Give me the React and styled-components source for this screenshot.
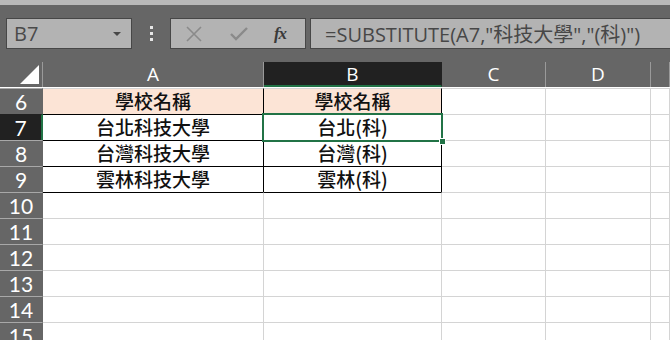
import React from "react";
import styled, { createGlobalStyle } from "styled-components";

const GlobalStyle = createGlobalStyle`
  html, body {
    margin: 0;
    padding: 0;
    background: #ffffff;
    overflow: hidden;
  }
`;

const GREEN = "#217346";

const StyledWindow = styled.div`
  width: 670px;
  height: 340px;
  overflow: hidden;
  background: #666666;
  display: flex;
  flex-direction: column;
`;

const StyledTopStrip = styled.div`
  height: 5px;
  background: #b9b9b9;
  flex: none;
`;

const StyledFormulaBar = styled.div`
  height: 57px;
  flex: none;
  display: flex;
  align-items: flex-start;
  padding: 13px 0 0 6px;
  box-sizing: border-box;
`;

const StyledNameBox = styled.div`
  width: 126px;
  height: 31px;
  box-sizing: border-box;
  background: #b3b3b3;
  border: 1px solid #474747;
  display: flex;
  align-items: center;
  justify-content: space-between;
  padding: 0 10px 0 7px;
  font-family: "Open Sans", "Liberation Sans", sans-serif;
  font-size: 20px;
  color: #4a4a4a;
`;

const StyledCaret = styled.span`
  width: 0;
  height: 0;
  border-left: 4px solid transparent;
  border-right: 4px solid transparent;
  border-top: 4px solid #474747;
`;

const StyledDots = styled.div`
  width: 38px;
  height: 31px;
  display: flex;
  flex-direction: column;
  align-items: center;
  justify-content: center;
  gap: 3px;

  span {
    width: 3px;
    height: 3px;
    background: #e6e6e6;
  }
`;

const StyledButtonBox = styled.div`
  width: 136px;
  height: 31px;
  box-sizing: border-box;
  background: #b3b3b3;
  border: 1px solid #474747;
  display: grid;
  grid-template-columns: 45px 45px 1fr;
  align-items: center;
  justify-items: center;
  margin-right: 4px;
`;

const StyledFx = styled.span`
  font-family: "Liberation Serif", serif;
  font-style: italic;
  font-weight: bold;
  font-size: 17px;
  color: #3a3a3a;
  letter-spacing: -1px;
  margin-right: 6px;
`;

const StyledFormulaBox = styled.div`
  flex: 1;
  height: 31px;
  box-sizing: border-box;
  background: #b3b3b3;
  border: 1px solid #474747;
  border-right: none;
  display: flex;
  align-items: center;
  padding-left: 14px;
  font-family: "Open Sans", "Noto Sans CJK TC", sans-serif;
  font-size: 20px;
  color: #474747;
  white-space: nowrap;
`;

const StyledGrid = styled.div`
  flex: 1;
  display: grid;
  grid-template-columns: 43px 221px 178px 104px 105px 1fr;
  grid-auto-rows: 26px;
  background: #ffffff;
`;

const StyledCorner = styled.div`
  background: #666666;
  border-right: 1px solid #9a9a9a;
  height: 25px;
  position: relative;

  &::after {
    content: "";
    position: absolute;
    right: 3px;
    bottom: 3px;
    width: 0;
    height: 0;
    border-left: 19px solid transparent;
    border-bottom: 19px solid #ffffff;
  }
`;

const StyledColHead = styled.div`
  height: 25px;
  box-sizing: border-box;
  background: ${(p) => (p.$active ? "#212121" : "#666666")};
  border-right: 1px solid ${(p) => (p.$active ? "#212121" : "#9a9a9a")};
  border-bottom: ${(p) => (p.$active ? `2px solid ${GREEN}` : "none")};
  color: #ffffff;
  font-family: "Open Sans", "Liberation Sans", sans-serif;
  font-size: 19px;
  line-height: 25px;
  text-align: center;
`;

const StyledRowHead = styled.div`
  box-sizing: border-box;
  background: ${(p) => (p.$active ? "#212121" : "#666666")};
  border-top: 1px solid ${(p) => (p.$active ? "#212121" : "#a8a8a8")};
  border-right: ${(p) => (p.$active ? `2px solid ${GREEN}` : "1px solid #666")};
  color: #ffffff;
  font-family: "Lato", "Liberation Sans", sans-serif;
  font-size: 21px;
  line-height: 25px;
  text-align: center;
`;

const StyledCell = styled.div`
  position: relative;
  box-sizing: border-box;
  background: ${(p) => (p.$head ? "#fce4d6" : "#ffffff")};
  border-top: 1px solid ${(p) => (p.$top ? "#000" : "#d4d4d4")};
  border-right: 1px solid ${(p) => (p.$right ? "#000" : "#d4d4d4")};
  font-family: "Noto Sans CJK TC", "Noto Sans CJK SC", sans-serif;
  font-weight: 500;
  font-size: 19px;
  line-height: 24px;
  color: #111111;
  text-align: center;
  white-space: nowrap;
`;

const StyledSelection = styled.div`
  position: absolute;
  z-index: 2;
  left: -2px;
  top: -2px;
  right: -2px;
  bottom: -2px;
  border: 2px solid ${GREEN};
  pointer-events: none;

  &::after {
    content: "";
    position: absolute;
    right: -5px;
    bottom: -5px;
    width: 5px;
    height: 5px;
    background: ${GREEN};
    border: 1px solid #ffffff;
  }
`;

const columns = ["A", "B", "C", "D", ""];

const tableRows = {
  6: ["學校名稱", "學校名稱"],
  7: ["台北科技大學", "台北(科)"],
  8: ["台灣科技大學", "台灣(科)"],
  9: ["雲林科技大學", "雲林(科)"],
};

function CrossIcon() {
  return (
    <svg width="18" height="18" viewBox="0 0 18 18">
      <path d="M2 2 L16 16 M16 2 L2 16" stroke="#8a8a8a" strokeWidth="1.6" fill="none" />
    </svg>
  );
}

function CheckIcon() {
  return (
    <svg width="20" height="16" viewBox="0 0 20 16">
      <path d="M2 8 L7 13 L18 2" stroke="#8a8a8a" strokeWidth="2.4" fill="none" />
    </svg>
  );
}

function SheetRow({ num }) {
  const data = tableRows[num];
  const inTable = Boolean(data) || num === 10;
  return (
    <>
      <StyledRowHead $active={num === 7}>{num}</StyledRowHead>
      {columns.map((col, i) => {
        const isTableCol = i < 2;
        const top = isTableCol && inTable && num !== 6;
        const right = Boolean(data) && (i === 0 || i === 1);
        return (
          <StyledCell
            key={col + i}
            $head={num === 6 && isTableCol}
            $top={top}
            $right={right}
          >
            {data && isTableCol ? data[i] : null}
            {num === 7 && i === 1 && <StyledSelection />}
          </StyledCell>
        );
      })}
    </>
  );
}

export default function App() {
  const rows = [6, 7, 8, 9, 10, 11, 12, 13, 14, 15];
  return (
    <StyledWindow>
      <GlobalStyle />
      <StyledTopStrip />
      <StyledFormulaBar>
        <StyledNameBox>
          B7
          <StyledCaret />
        </StyledNameBox>
        <StyledDots>
          <span />
          <span />
          <span />
        </StyledDots>
        <StyledButtonBox>
          <CrossIcon />
          <CheckIcon />
          <StyledFx>fx</StyledFx>
        </StyledButtonBox>
        <StyledFormulaBox>=SUBSTITUTE(A7,"科技大學","(科)")</StyledFormulaBox>
      </StyledFormulaBar>
      <StyledGrid>
        <StyledCorner />
        {columns.map((col, i) => (
          <StyledColHead key={col + i} $active={col === "B"}>
            {col}
          </StyledColHead>
        ))}
        {rows.map((n) => (
          <SheetRow key={n} num={n} />
        ))}
      </StyledGrid>
    </StyledWindow>
  );
}
